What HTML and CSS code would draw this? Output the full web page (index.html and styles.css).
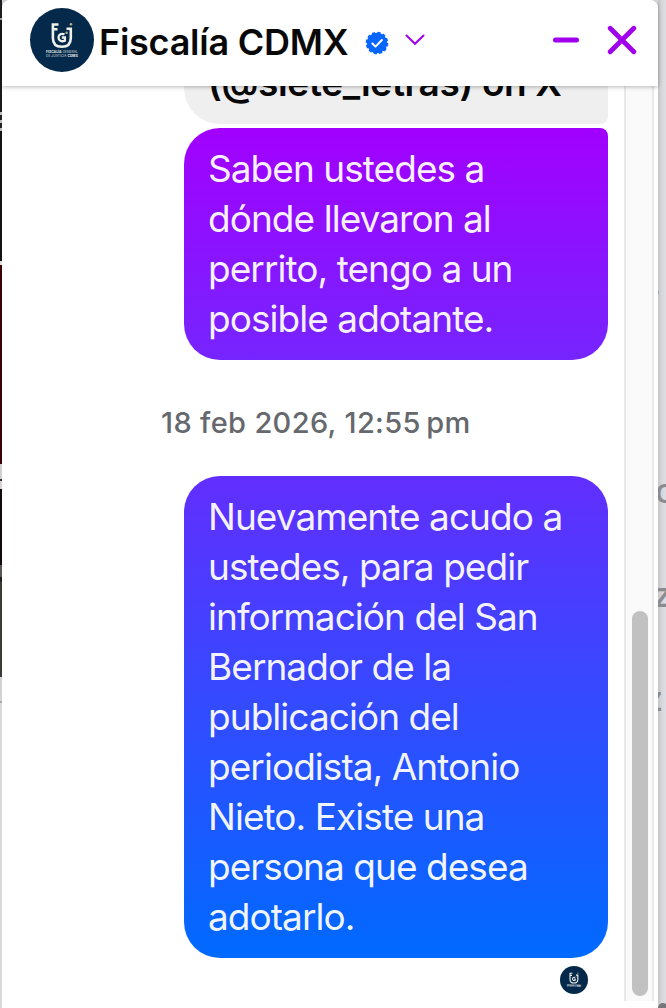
FILE: index.html
```html
<!DOCTYPE html>
<html lang="es">
<head>
<meta charset="utf-8">
<title>Fiscalía CDMX</title>
<link rel="stylesheet" href="styles.css">
</head>
<body>
<svg width="0" height="0" class="defs">
  <symbol id="logo" viewBox="0 0 64 64">
    <circle cx="32" cy="32" r="32" fill="#05294a"/>
    <g fill="none" stroke="#eef0ea" stroke-width="2.6">
      <path d="M28.500 16.500H22.900V30C22.900 36 26.500 38.800 31.800 38.800S40.800 36 40.800 30V20.500M36.500 20.800H42M22.900 21.300H27.500"/>
      <path d="M34.500 26.400C31.500 24.900 28.500 26.500 28.500 29.500S31.500 34.200 34.900 32.600V29.500H31.800" stroke-width="2.300"/>
    </g>
    <g fill="#b5ad91"><circle cx="41" cy="16.300" r="1.300"/><circle cx="36.600" cy="24.700" r="1.200"/></g>
    <g fill="#d5dcdf" font-family="Inter, sans-serif" font-size="3.500">
      <text x="16" y="44.700" textLength="32" lengthAdjust="spacingAndGlyphs"><tspan font-weight="800">FISCALÍA</tspan> GENERAL</text>
      <text x="16" y="49" textLength="32" lengthAdjust="spacingAndGlyphs">DE JUSTICIA <tspan font-weight="800">CDMX</tspan></text>
    </g>
  </symbol>
</svg>
<div class="screen">
  <div class="edge-left"></div>
  <main class="chat">
    <header class="header">
      <svg class="avatar"><use href="#logo"/></svg>
      <h1 class="name">Fiscalía CDMX</h1>
      <svg class="verified" viewBox="0 0 24 24">
        <circle cx="12" cy="12" r="10.3" fill="#0866ff"/>
        <circle cx="12" cy="12" r="10" fill="none" stroke="#0866ff" stroke-width="2.6" stroke-dasharray="3.1 2.136"/>
        <path d="M7.4 12.5l3.1 3.1 6.4-6.6" fill="none" stroke="#fff" stroke-width="2" stroke-linecap="round" stroke-linejoin="round"/>
      </svg>
      <svg class="chevron" viewBox="0 0 20 12"><path d="M1.5 1.5L10 9.8l8.500-8.300" fill="none" stroke="#a000ec" stroke-width="2" stroke-linecap="round"/></svg>
      <svg class="minimize" viewBox="0 0 26 6"><path d="M2.500 3H23.500" stroke="#a000ec" stroke-width="5" stroke-linecap="round"/></svg>
      <svg class="close" viewBox="0 0 30 30"><path d="M3.200 3.200L26.800 26.800M26.800 3.200L3.200 26.800" stroke="#a000ec" stroke-width="4.800" stroke-linecap="round"/></svg>
    </header>
    <div class="body">
      <section class="messages">
        <div class="bubble link-card"><span class="line">(@siete_letras) on X</span></div>
        <div class="bubble first">
          <span class="line">Saben ustedes a</span>
          <span class="line">dónde llevaron al</span>
          <span class="line">perrito, tengo a un</span>
          <span class="line">posible adotante.</span>
        </div>
        <time class="stamp">18 feb 2026, 12:55&#8239;pm</time>
        <div class="bubble second">
          <span class="line">Nuevamente acudo a</span>
          <span class="line">ustedes, para pedir</span>
          <span class="line">información del San</span>
          <span class="line">Bernador de la</span>
          <span class="line">publicación del</span>
          <span class="line">periodista, Antonio</span>
          <span class="line">Nieto. Existe una</span>
          <span class="line">persona que desea</span>
          <span class="line">adotarlo.</span>
        </div>
        <svg class="seen"><use href="#logo"/></svg>
      </section>
      <div class="track"><div class="thumb"></div></div>
    </div>
  </main>
  <aside class="edge-right">
    <span class="peek dot">.</span>
    <span class="peek o">o</span>
    <span class="peek z1">z</span>
    <span class="peek z2">z</span>
    <span class="peek disc"></span>
  </aside>
</div>
</body>
</html>
```
FILE: styles.css
```css
body {
  margin: 0;
  font-family: Inter, "Liberation Sans", sans-serif;
}

.defs {
  position: absolute;
}

.screen {
  display: flex;
  height: 1008px;
  overflow: hidden;
  background: #d9dade;
}

/* Sliver of the page visible behind the chat window */
.edge-left {
  width: 2px;
  background: linear-gradient(#202022 0 18px, #aaa 18px 20px, #19191b 20px 112px, #bbb 112px 115px, #222 115px 120px, #bbb 120px 123px, #222 123px 128px, #bbb 128px 131px, #121214 131px 261px, #ddd 261px 265px, #3c0007 265px 464px, #d0d0d2 464px 479px, #333 479px 481px, #ddd2d2 481px 489px, #120809 489px 565px, #595553 565px 577px, #20201d 577px 582px, #3b3b36 582px 677px, #d2d2d4 677px 701px, #aaa 701px 703px, #d9d9dc 703px);
}

.chat {
  display: flex;
  flex-direction: column;
  width: 656px;
  background: #fff;
  border-radius: 8px 8px 0 0;
}

.header {
  position: relative;
  z-index: 1;
  box-sizing: border-box;
  display: flex;
  align-items: center;
  height: 86px;
  padding: 0 21px 6px 28px;
  border-radius: 8px 8px 0 0;
  background: #fff;
  box-shadow: 0 1px 4px rgba(0, 0, 0, .28);
}

.avatar {
  width: 64px;
  height: 64px;
}

.name {
  width: 251px;
  margin: 4px 0 0 5px;
  font-size: 36px;
  font-weight: 560;
  line-height: 44px;
  letter-spacing: -.25px;
  white-space: nowrap;
  color: #080809;
}

.verified {
  width: 24px;
  height: 24px;
  margin: 5px 0 0 15px;
}

.chevron {
  width: 20px;
  height: 12px;
  margin-left: 16px;
}

.minimize {
  width: 26px;
  height: 6px;
  margin-left: auto;
}

.close {
  width: 30px;
  height: 30px;
  margin-left: 28px;
}

.body {
  display: flex;
  flex: 1;
  min-height: 0;
  overflow: hidden;
}

.messages {
  display: flex;
  flex-direction: column;
  align-items: flex-end;
  justify-content: flex-end;
  box-sizing: border-box;
  width: 622px;
  padding: 0 16px 14px 0;
}

.bubble {
  box-sizing: border-box;
  flex: none;
  width: 424px;
  padding: 16px 24px;
  border-radius: 36px;
  font-size: 37px;
  line-height: 50px;
  letter-spacing: -.95px;
  color: rgba(255, 255, 255, .95);
}

.line {
  display: block;
  width: max-content;
  white-space: nowrap;
}

.link-card {
  margin-bottom: 4px;
  padding-bottom: 16px;
  border-radius: 36px 36px 8px 36px;
  background: #efefef;
  color: #080809;
  font-weight: 600;
  letter-spacing: -.35px;
}

.first {
  border-top-right-radius: 8px;
  background: linear-gradient(#a200ff, #7525ff);
}

.stamp {
  width: 310px;
  height: 36px;
  margin: 45px 137px 35px 0;
  font-size: 29px;
  font-weight: 500;
  line-height: 36px;
  letter-spacing: .35px;
  white-space: nowrap;
  color: #65686c;
}

.second {
  background: linear-gradient(#622eff, #006aff);
}

.seen {
  flex: none;
  width: 28px;
  height: 28px;
  margin: 8px 20px 0 0;
}

.track {
  box-sizing: border-box;
  width: 30px;
  height: 915px;
  padding: 525px 4px 5px 6px;
  border: solid #e8e8e8;
  border-width: 0 2px;
  background: #fafafa;
}

.thumb {
  width: 16px;
  height: 385px;
  border-radius: 8px;
  background: #c1c1c1;
}

.edge-right {
  position: relative;
  width: 8px;
  overflow: hidden;
  background: linear-gradient(90deg, #c4c4c8, #d5d5d9 40%, #dedfe4);
}

.peek {
  position: absolute;
  font-size: 34px;
  font-weight: 500;
  line-height: 40px;
  color: #8b8b8f;
}

.dot { top: 263px; left: -7px; }
.o { top: 471px; left: -3px; }
.z1 { top: 575px; left: -5px; }
.z2 { top: 679px; left: -14px; }

.disc {
  top: 1003px;
  left: 0;
  width: 10px;
  height: 10px;
  border-radius: 5px;
  background: #77777b;
}
```
